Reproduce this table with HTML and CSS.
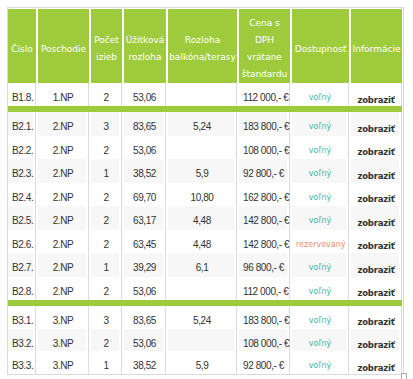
FILE: index.html
```html
<!DOCTYPE html>
<html lang="sk">
<head>
<meta charset="utf-8">
<title>Byty</title>
<link rel="stylesheet" href="styles.css">
</head>
<body>
<div class="wrap">
<table class="units">
<thead>
<tr class="head">
<th class="c1">Číslo</th>
<th class="c2">Poschodie</th>
<th class="c3">Počet<br>izieb</th>
<th class="c4">Úžitková<br>rozloha</th>
<th class="c5">Rozloha<br>balkóna/terasy</th>
<th class="c6">Cena s<br>DPH<br>vrátane<br>štandardu</th>
<th class="c7">Dostupnosť</th>
<th class="c8">Informácie</th>
</tr>
</thead>
<tbody>
<tr><td class="l">B1.8.</td><td>1.NP</td><td>2</td><td>53,06</td><td></td><td class="l">112 000,- €</td><td class="st">voľný</td><td class="info">zobraziť</td></tr>
<tr class="sep"><td colspan="8"></td></tr>
<tr class="r2 alt"><td class="l">B2.1.</td><td>2.NP</td><td>3</td><td>83,65</td><td>5,24</td><td class="l">183 800,- €</td><td class="st">voľný</td><td class="info">zobraziť</td></tr>
<tr class="r2"><td class="l">B2.2.</td><td>2.NP</td><td>2</td><td>53,06</td><td></td><td class="l">108 000,- €</td><td class="st">voľný</td><td class="info">zobraziť</td></tr>
<tr class="r2 alt"><td class="l">B2.3.</td><td>2.NP</td><td>1</td><td>38,52</td><td>5,9</td><td class="l">92 800,- €</td><td class="st">voľný</td><td class="info">zobraziť</td></tr>
<tr class="r2"><td class="l">B2.4.</td><td>2.NP</td><td>2</td><td>69,70</td><td>10,80</td><td class="l">162 800,- €</td><td class="st">voľný</td><td class="info">zobraziť</td></tr>
<tr class="r2 alt"><td class="l">B2.5.</td><td>2.NP</td><td>2</td><td>63,17</td><td>4,48</td><td class="l">142 800,- €</td><td class="st">voľný</td><td class="info">zobraziť</td></tr>
<tr class="r2"><td class="l">B2.6.</td><td>2.NP</td><td>2</td><td>63,45</td><td>4,48</td><td class="l">142 800,- €</td><td class="st res">rezervovaný</td><td class="info">zobraziť</td></tr>
<tr class="r2 alt"><td class="l">B2.7.</td><td>2.NP</td><td>1</td><td>39,29</td><td>6,1</td><td class="l">96 800,- €</td><td class="st">voľný</td><td class="info">zobraziť</td></tr>
<tr class="r2"><td class="l">B2.8.</td><td>2.NP</td><td>2</td><td>53,06</td><td></td><td class="l">112 000,- €</td><td class="st">voľný</td><td class="info">zobraziť</td></tr>
<tr class="sep"><td colspan="8"></td></tr>
<tr class="r3"><td class="l">B3.1.</td><td>3.NP</td><td>3</td><td>83,65</td><td>5,24</td><td class="l">183 800,- €</td><td class="st">voľný</td><td class="info">zobraziť</td></tr>
<tr class="r3 alt"><td class="l">B3.2.</td><td>3.NP</td><td>2</td><td>53,06</td><td></td><td class="l">108 000,- €</td><td class="st">voľný</td><td class="info">zobraziť</td></tr>
<tr class="r3"><td class="l">B3.3.</td><td>3.NP</td><td>1</td><td>38,52</td><td>5,9</td><td class="l">92 800,- €</td><td class="st">voľný</td><td class="info">zobraziť</td></tr>
</tbody>
</table>
</div>
<span class="corner"></span>
</body>
</html>
```

FILE: styles.css
```css
body {
  margin: 0;
  background: #fff;
}

.wrap {
  margin: 7px 0 0 7px;
  width: 395px;
  border: 1px solid #dadada;
  padding-top: 1px;
  overflow: hidden;
}

.units {
  border-collapse: separate;
  border-spacing: 2px 0;
  margin-left: -2px;
  table-layout: fixed;
  width: 398px;
}

.units th {
  box-sizing: border-box;
  background: #9dcb3c;
  color: #fff;
  font-family: "DejaVu Sans", sans-serif;
  font-size: 9px;
  line-height: 17px;
  font-weight: normal;
  padding: 6px 1px 0;
  text-align: center;
  vertical-align: middle;
  white-space: nowrap;
}

.head { height: 74px; }

.c1 { width: 28px; }
.c2 { width: 51px; }
.c3 { width: 31px; }
.c4 { width: 42px; }
.c5 { width: 69px; }
.c6 { width: 51px; }
.c7 { width: 57px; }
.c8 { width: 51px; }

.units td {
  box-sizing: border-box;
  padding: 6px 4px 0;
  border-right: 1px solid #dcdcdc;
  box-shadow: inset -2px 0 0 #fff;
  font-family: "Liberation Sans", Arial, sans-serif;
  font-size: 10px;
  letter-spacing: -0.4px;
  color: #333;
  text-align: center;
  vertical-align: middle;
  white-space: nowrap;
}

.units tbody tr { height: 23px; }
.units tbody tr.r2 { height: 23.5px; }
.units tbody tr.r3 { height: 22.7px; }

.units tr.alt td { background: #f7f7f7; }

.units td.l { text-align: left; }

.units td.st {
  font-family: "DejaVu Sans", sans-serif;
  font-size: 8px;
  letter-spacing: 0;
  color: #3db4a2;
}

.units td.res { color: #f28a6f; }

.units td.info {
  font-family: "DejaVu Sans", sans-serif;
  font-size: 8.5px;
  font-weight: bold;
  letter-spacing: -0.2px;
  color: #333;
  padding-top: 10px;
}

.units tr.sep { height: 6px; }

.units tr.sep td {
  background: #9dcb3c;
  border-right: 0;
  box-shadow: none;
  padding: 0;
  height: 6px;
  font-size: 0;
  line-height: 0;
}

.corner {
  position: absolute;
  left: 401px;
  top: 373px;
  width: 4px;
  height: 8px;
  border: 1px solid #a8a8a8;
  background: #fff;
}
```
